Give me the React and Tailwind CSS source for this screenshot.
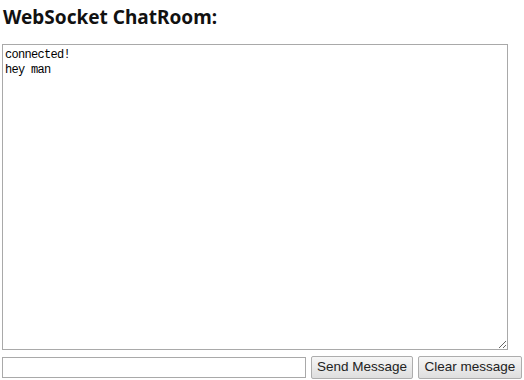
import React from "react";

export default function App() {
  return (
    <div className="w-[524px] h-[380px] bg-white px-[2px] overflow-hidden">
      <h2 className="h-[44px] pt-[3px] pl-[1px] text-[19px] leading-[28px] font-bold text-[#111] font-['Noto_Sans',sans-serif]">
        WebSocket ChatRoom:
      </h2>
      <textarea
        className="block w-[506px] h-[306px] border border-[#a9a9a9] px-[2px] pt-[3px] text-[12px] leading-[15px] tracking-[-0.7px] text-black font-['Liberation_Mono',monospace] outline-none"
        defaultValue={"connected!\nhey man"}
      />
      <div className="flex items-center gap-[5px] mt-[6px]">
        <input
          type="text"
          className="w-[304px] h-[21px] border border-[#a9a9a9] px-[2px] text-[13px] outline-none"
        />
        <button className="h-[23px] w-[102px] border border-[#adadad] rounded-[2px] bg-gradient-to-b from-[#f6f6f6] to-[#dedede] text-[13.5px] text-[#222] font-['Liberation_Sans',sans-serif]">
          Send Message
        </button>
        <button className="h-[23px] w-[104px] border border-[#adadad] rounded-[2px] bg-gradient-to-b from-[#f6f6f6] to-[#dedede] text-[13.5px] text-[#222] font-['Liberation_Sans',sans-serif]">
          Clear message
        </button>
      </div>
    </div>
  );
}
